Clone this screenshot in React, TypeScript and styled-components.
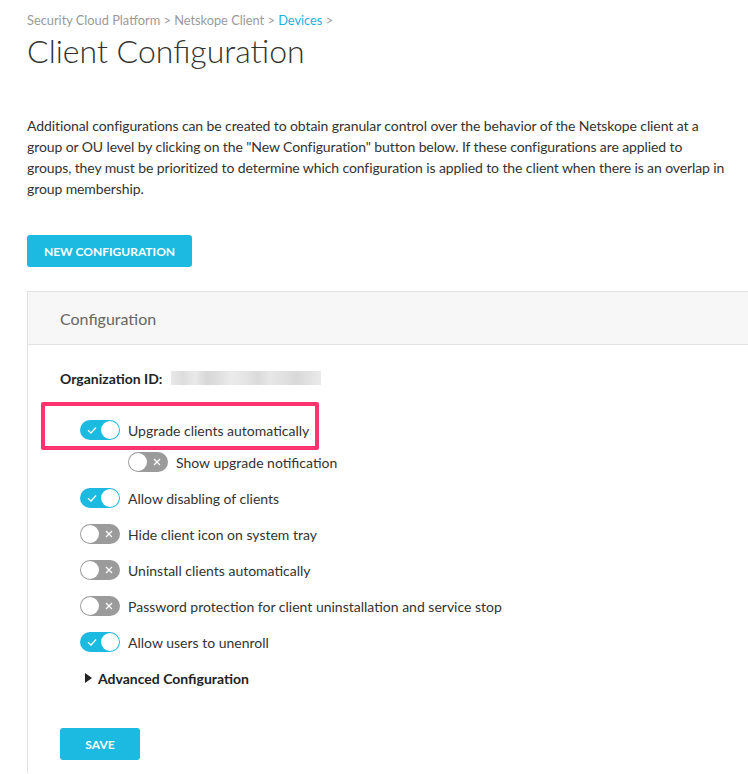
import React from "react";
import styled, { createGlobalStyle } from "styled-components";

const Global = createGlobalStyle`
  html, body { margin: 0; padding: 0; background: #fff; }
  body { font-family: Lato, "Open Sans", sans-serif; color: #333; }
`;

const Page = styled.div`
  padding: 12px 0 0 27px;
  width: 721px;
  overflow: hidden;
`;

const Breadcrumb = styled.div`
  font-size: 12.8px;
  color: #9a9a9a;
  line-height: 16px;
`;

const Crumb = styled.span<{ $link?: boolean }>`
  color: ${(p) => (p.$link ? "#1ab3dd" : "#9a9a9a")};
`;

const Title = styled.h1`
  margin: 3px 0 0;
  font-weight: 300;
  font-size: 32px;
  line-height: 40px;
  color: #333;
`;

const Intro = styled.p`
  margin: 44px 0 0;
  font-size: 14px;
  line-height: 21px;
  letter-spacing: -0.1px;
  color: #333;
  white-space: nowrap;
`;

const PrimaryButton = styled.button<{ $w: number }>`
  display: flex;
  align-items: center;
  justify-content: center;
  width: ${(p) => p.$w}px;
  height: 32px;
  border: none;
  border-radius: 3px;
  background: #1cb9e0;
  color: #fff;
  font-family: Lato, sans-serif;
  font-weight: 700;
  font-size: 12px;
  padding: 0;
`;

const TopButton = styled.div`
  margin-top: 36px;
`;

const Panel = styled.section`
  margin-top: 24px;
  border-left: 1px solid #e2e2e2;
  border-top: 1px solid #e2e2e2;
  width: 740px;
`;

const PanelHeader = styled.div`
  height: 52px;
  background: #f7f7f7;
  border-bottom: 1px solid #e2e2e2;
  display: flex;
  align-items: center;
  padding-left: 32px;
  font-size: 16px;
  color: #666;
`;

const PanelBody = styled.div`
  padding: 23px 0 13px 32px;
`;

const OrgRow = styled.div`
  display: flex;
  align-items: center;
  height: 20px;
  font-weight: 700;
  font-size: 14px;
  color: #222;
`;

const Blur = styled.div`
  margin-left: 9px;
  width: 150px;
  height: 14px;
  background: linear-gradient(
    90deg,
    #e6e6e6 0%, #d9d9d9 8%, #e8e8e8 16%, #d2d2d2 24%, #dcdcdc 32%, #e9e9e9 40%,
    #e1e1e1 50%, #d6d6d6 58%, #e4e4e4 66%, #dedede 74%, #d4d4d4 84%, #e8e8e8 100%
  );
  opacity: 0.9;
`;

const Highlight = styled.div`
  box-sizing: border-box;
  margin: 14px 0 0 -19px;
  width: 278px;
  height: 48px;
  border: 4px solid #ff3370;
  border-radius: 2px;
  display: flex;
  align-items: flex-start;
  padding: 14px 0 0 35px;
`;

const Row = styled.div<{ $indent?: number; $top: number }>`
  display: flex;
  align-items: center;
  gap: 8px;
  margin-top: ${(p) => p.$top}px;
  margin-left: ${(p) => (p.$indent || 0) + 20}px;
  height: 20px;
  font-size: 14px;
  color: #333;
`;

const InRow = styled.div`
  display: flex;
  align-items: center;
  gap: 8px;
  height: 20px;
  font-size: 14px;
  color: #333;
`;

const Track = styled.span<{ $on: boolean }>`
  position: relative;
  display: inline-block;
  width: 40px;
  height: 20px;
  border-radius: 10px;
  background: ${(p) => (p.$on ? "#1cb9e0" : "#9b9b9b")};
  flex-shrink: 0;
`;

const Knob = styled.span<{ $on: boolean }>`
  position: absolute;
  top: 1px;
  left: ${(p) => (p.$on ? "21px" : "1px")};
  width: 18px;
  height: 18px;
  border-radius: 50%;
  background: #fff;
`;

const Mark = styled.svg<{ $on: boolean }>`
  position: absolute;
  top: 5px;
  left: ${(p) => (p.$on ? "7px" : "24px")};
  width: 10px;
  height: 10px;
`;

const Toggle = ({ on }: { on: boolean }) => (
  <Track $on={on}>
    <Knob $on={on} />
    <Mark $on={on} viewBox="0 0 10 10">
      {on ? (
        <path d="M1 5.2 L4 8 L9 2.5" stroke="#fff" strokeWidth="1.3" fill="none" />
      ) : (
        <path d="M2 2 L8 8 M8 2 L2 8" stroke="#fff" strokeWidth="1.3" fill="none" />
      )}
    </Mark>
  </Track>
);

const Advanced = styled.div`
  display: flex;
  align-items: center;
  gap: 6px;
  margin: 16px 0 0 25px;
  height: 20px;
  font-weight: 700;
  font-size: 14px;
  color: #222;
`;

const Triangle = styled.span`
  width: 0;
  height: 0;
  border-top: 5px solid transparent;
  border-bottom: 5px solid transparent;
  border-left: 7px solid #222;
`;

const SaveWrap = styled.div`
  margin-top: 40px;
`;

const rows: { label: string; on: boolean }[] = [
  { label: "Allow disabling of clients", on: true },
  { label: "Hide client icon on system tray", on: false },
  { label: "Uninstall clients automatically", on: false },
  { label: "Password protection for client uninstallation and service stop", on: false },
  { label: "Allow users to unenroll", on: true },
];

export default function App() {
  return (
    <>
      <Global />
      <Page>
        <Breadcrumb>
          <Crumb>Security Cloud Platform &gt; Netskope Client &gt; </Crumb>
          <Crumb $link>Devices</Crumb>
          <Crumb> &gt;</Crumb>
        </Breadcrumb>
        <Title>Client Configuration</Title>
        <Intro>
          Additional configurations can be created to obtain granular control over the behavior of the
          Netskope client at a<br />
          group or OU level by clicking on the "New Configuration" button below. If these configurations
          are applied to<br />
          groups, they must be prioritized to determine which configuration is applied to the client when
          there is an overlap in<br />
          group membership.
        </Intro>
        <TopButton>
          <PrimaryButton $w={165}>NEW CONFIGURATION</PrimaryButton>
        </TopButton>
        <Panel>
          <PanelHeader>Configuration</PanelHeader>
          <PanelBody>
            <OrgRow>
              Organization ID:
              <Blur />
            </OrgRow>
            <Highlight>
              <InRow>
                <Toggle on />
                Upgrade clients automatically
              </InRow>
            </Highlight>
            <Row $indent={48} $top={2}>
              <Toggle on={false} />
              Show upgrade notification
            </Row>
            {rows.map((r) => (
              <Row key={r.label} $top={16}>
                <Toggle on={r.on} />
                {r.label}
              </Row>
            ))}
            <Advanced>
              <Triangle />
              Advanced Configuration
            </Advanced>
            <SaveWrap>
              <PrimaryButton $w={80}>SAVE</PrimaryButton>
            </SaveWrap>
          </PanelBody>
        </Panel>
      </Page>
    </>
  );
}
